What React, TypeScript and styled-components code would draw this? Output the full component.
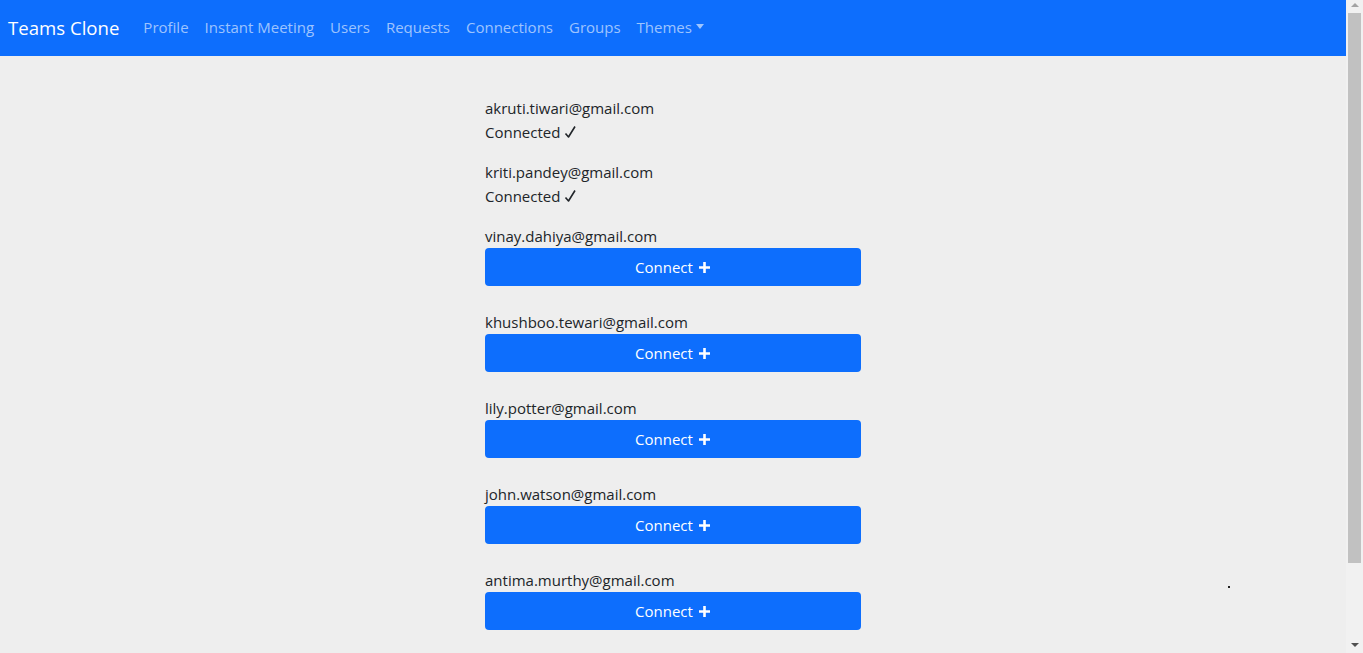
import React, { FC } from "react";
import styled, { createGlobalStyle } from "styled-components";

interface User {
  email: string;
  connected: boolean;
}

const USERS: User[] = [
  { email: "akruti.tiwari@gmail.com", connected: true },
  { email: "kriti.pandey@gmail.com", connected: true },
  { email: "vinay.dahiya@gmail.com", connected: false },
  { email: "khushboo.tewari@gmail.com", connected: false },
  { email: "lily.potter@gmail.com", connected: false },
  { email: "john.watson@gmail.com", connected: false },
  { email: "antima.murthy@gmail.com", connected: false },
];

const NAV_LINKS = ["Profile", "Instant Meeting", "Users", "Requests", "Connections", "Groups"];

const GlobalStyle = createGlobalStyle`
  html, body {
    margin: 0;
    padding: 0;
    background: #eeeeee;
    font-family: "Open Sans", "Noto Sans", sans-serif;
    font-size: 15px;
    color: #212529;
    overflow: hidden;
  }
  * { box-sizing: border-box; }
`;

const Frame = styled.div`
  height: 100vh;
  display: flex;
`;

const Content = styled.div`
  flex: 1;
  min-width: 0;
  overflow: hidden;
  position: relative;
`;

// drawn scrollbar, the headless browser hides the real one
const ScrollBar = styled.div`
  width: 17px;
  background: #f1f1f1;
  display: flex;
  flex-direction: column;
  align-items: center;
  padding: 3px 0 6px;
`;

const Arrow = styled.span<{ $down?: boolean }>`
  width: 0;
  height: 0;
  border-left: 4px solid transparent;
  border-right: 4px solid transparent;
  ${(p) =>
    p.$down
      ? "border-top: 4px solid #505050; margin-top: auto;"
      : "border-bottom: 4px solid #a3a3a3;"}
`;

const Thumb = styled.span`
  width: 13px;
  height: 550px;
  margin-top: 6px;
  background: #c1c1c1;
`;

const Navbar = styled.nav`
  height: 56px;
  background: #0d6efd;
  display: flex;
  align-items: center;
  padding: 0 8px;
`;

const Brand = styled.a`
  color: #fff;
  font-size: 18.6px;
  margin-right: 16px;
  text-decoration: none;
  padding-bottom: 2px;
`;

const NavLink = styled.a`
  color: rgba(255, 255, 255, 0.6);
  padding: 0 8px;
  text-decoration: none;
  display: flex;
  align-items: center;
  padding-bottom: 3px;
`;

const Caret = styled.span`
  display: inline-block;
  margin-left: 4px;
  border-top: 5px solid rgba(255, 255, 255, 0.6);
  border-left: 4.5px solid transparent;
  border-right: 4.5px solid transparent;
`;

const List = styled.main`
  width: 376px;
  margin: 40px auto 0;
  display: flex;
  flex-direction: column;
`;

const Item = styled.div<{ $button: boolean }>`
  display: flex;
  flex-direction: column;
  margin-bottom: ${(p) => (p.$button ? 24 : 16)}px;
  line-height: 24px;
`;

const Status = styled.span`
  display: flex;
  align-items: center;
  gap: 4px;
`;

const ConnectButton = styled.button`
  height: 38px;
  width: 100%;
  border: none;
  border-radius: 4px;
  background: #0d6efd;
  color: #fff;
  font-family: inherit;
  font-size: 15px;
  display: flex;
  align-items: center;
  justify-content: center;
  gap: 5px;
  cursor: pointer;
`;

const Dot = styled.span`
  position: absolute;
  left: 1228px;
  top: 586px;
  width: 2px;
  height: 2px;
  background: #222;
`;

const Plus: FC = () => (
  <svg width="13" height="13" viewBox="0 0 13 13">
    <path d="M6.5 1v11M1 6.5h11" stroke="#fff" strokeWidth="2.6" />
  </svg>
);

const Check: FC = () => (
  <svg width="12" height="14" viewBox="0 0 12 14">
    <path d="M1.5 8.5 L4.5 12 L11 1.5" stroke="#212529" strokeWidth="1.6" fill="none" strokeLinejoin="round" />
  </svg>
);

const App: FC = () => {
  return (
    <Frame>
      <GlobalStyle />
      <Content>
        <Navbar>
          <Brand href="#">Teams Clone</Brand>
          {NAV_LINKS.map((l) => (
            <NavLink key={l} href="#">{l}</NavLink>
          ))}
          <NavLink href="#">
            Themes <Caret />
          </NavLink>
        </Navbar>
        <List>
          {USERS.map((u) => (
            <Item key={u.email} $button={!u.connected}>
              <span>{u.email}</span>
              {u.connected ? (
                <Status>
                  Connected <Check />
                </Status>
              ) : (
                <ConnectButton>
                  Connect <Plus />
                </ConnectButton>
              )}
            </Item>
          ))}
        </List>
        <Dot />
      </Content>
      <ScrollBar>
        <Arrow />
        <Thumb />
        <Arrow $down />
      </ScrollBar>
    </Frame>
  );
};

export default App;
